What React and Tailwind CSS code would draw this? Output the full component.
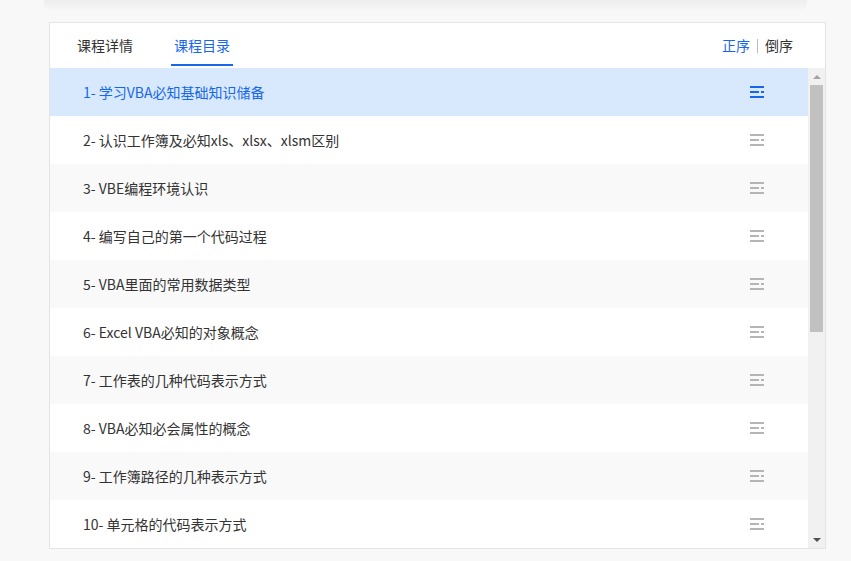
import React from 'react'

const lessons = [
  '学习VBA必知基础知识储备',
  '认识工作簿及必知xls、xlsx、xlsm区别',
  'VBE编程环境认识',
  '编写自己的第一个代码过程',
  'VBA里面的常用数据类型',
  'Excel VBA必知的对象概念',
  '工作表的几种代码表示方式',
  'VBA必知必会属性的概念',
  '工作簿路径的几种表示方式',
  '单元格的代码表示方式',
]

function ListIcon({ color }) {
  return (
    <svg width="14" height="12" viewBox="0 0 14 12" fill={color}>
      <rect x="0" y="0" width="14" height="2" />
      <rect x="0" y="5" width="9" height="2" />
      <rect x="11" y="5" width="3" height="2" />
      <rect x="0" y="10" width="14" height="2" />
    </svg>
  )
}

export default function App() {
  return (
    <div
      className="min-h-[561px] w-[851px] bg-[#f8f8f8]"
      style={{ fontFamily: '"Noto Sans CJK SC", "Noto Sans", sans-serif' }}
    >
      <div className="mx-[44px] h-[12px] rounded-b-[8px] bg-gradient-to-b from-[#eeeeee] to-[#f8f8f8]" />
      <div className="ml-[49px] mt-[10px] w-[777px] border border-[#e4e4e4] bg-white">
        {/* header */}
        <div className="flex h-[45px] items-stretch justify-between pl-[27px] pr-[32px]">
          <div className="flex items-stretch gap-[38px] text-[14px]">
            <div className="flex items-center text-[#333]">课程详情</div>
            <div className="relative flex items-center px-[3px] text-[#1768e8]">
              课程目录
              <span className="absolute bottom-[2px] left-0 right-0 h-[2px] bg-[#1768e8]" />
            </div>
          </div>
          <div className="flex items-center text-[14px]">
            <span className="text-[#1768e8]">正序</span>
            <span className="mx-[7px] h-[14px] w-px bg-[#bbb]" />
            <span className="text-[#333]">倒序</span>
          </div>
        </div>
        {/* list */}
        <div className="flex">
          <div className="flex-1">
            {lessons.map((t, i) => {
              const active = i === 0
              const bg = active ? 'bg-[#d8e9fd]' : i % 2 === 0 ? 'bg-[#f9f9f9]' : 'bg-white'
              return (
                <div
                  key={i}
                  className={`flex h-[48px] items-center justify-between pl-[33px] pr-[44px] text-[14px] ${bg} ${
                    active ? 'text-[#1768e8]' : 'text-[#333]'
                  }`}
                >
                  <span>
                    {i + 1}- {t}
                  </span>
                  <ListIcon color={active ? '#1768e8' : '#b5b5b5'} />
                </div>
              )
            })}
          </div>
          <div className="flex w-[17px] flex-col items-center bg-[#f1f1f1]">
            <div className="flex h-[17px] items-center justify-center">
              <div className="h-0 w-0 border-x-[4px] border-b-[4px] border-x-transparent border-b-[#a3a3a3]" />
            </div>
            <div className="h-[247px] w-[13px] bg-[#c1c1c1]" />
            <div className="flex-1" />
            <div className="flex h-[17px] items-center justify-center">
              <div className="h-0 w-0 border-x-[4px] border-t-[4px] border-x-transparent border-t-[#505050]" />
            </div>
          </div>
        </div>
      </div>
    </div>
  )
}
